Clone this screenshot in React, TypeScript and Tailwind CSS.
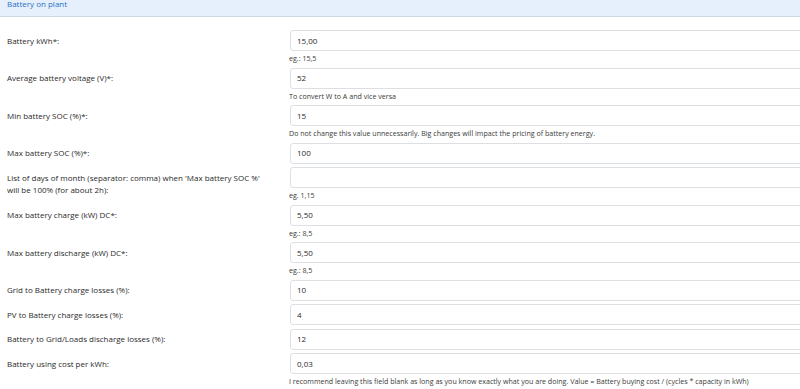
import React from "react";

type Row = { label: string[]; value: string; hint?: string };

const rows: Row[] = [
  { label: ["Battery kWh*:"], value: "15,00", hint: "eg.: 15,5" },
  { label: ["Average battery voltage (V)*:"], value: "52", hint: "To convert W to A and vice versa" },
  {
    label: ["Min battery SOC (%)*:"],
    value: "15",
    hint: "Do not change this value unnecessarily. Big changes will impact the pricing of battery energy.",
  },
  { label: ["Max battery SOC (%)*:"], value: "100" },
  {
    label: ["List of days of month (separator: comma) when 'Max battery SOC %'", "will be 100% (for about 2h):"],
    value: "",
    hint: "eg. 1,15",
  },
  { label: ["Max battery charge (kW) DC*:"], value: "5,50", hint: "eg.: 8,5" },
  { label: ["Max battery discharge (kW) DC*:"], value: "5,50", hint: "eg.: 8,5" },
  { label: ["Grid to Battery charge losses (%):"], value: "10" },
  { label: ["PV to Battery charge losses (%):"], value: "4" },
  { label: ["Battery to Grid/Loads discharge losses (%):"], value: "12" },
  {
    label: ["Battery using cost per kWh:"],
    value: "0,03",
    hint: "I recommend leaving this field blank as long as you know exactly what you are doing. Value = Battery buying cost / (cycles * capacity in kWh)",
  },
];

export default function App() {
  return (
    <div
      className="w-[800px] h-[389px] overflow-hidden bg-white text-[#2a2a2a]"
      style={{ fontFamily: '"Open Sans", "Noto Sans", sans-serif' }}
    >
      <div className="h-[17px] overflow-hidden bg-[#e6f0fd] border-b border-[#cdd8e6]">
        <div className="-mt-[2px] pl-[7px] text-[8px] leading-[12px] text-[#2b6fc2]">Battery on plant</div>
      </div>
      <div className="pt-[13px]">
        {rows.map((r, i) => (
          <div key={i} className="flex mb-[3.5px]">
            <div className="w-[290px] flex-none pl-[7px] pt-[4.5px] text-[8px] leading-[12px] text-[#2a2a2a]">
              {r.label.map((l, j) => (
                <div key={j}>{l}</div>
              ))}
            </div>
            <div className="w-[530px] flex-none">
              <div className="h-[21px] rounded-[3px] border border-[#dcdfe4] bg-white pl-[6px] flex items-center text-[8px] text-[#2a2a2a]">
                {r.value}
              </div>
              {r.hint && (
                <div className="h-[13px] -ml-[1px] pt-[1px] text-[7.1px] leading-[12px] text-[#3a3a3a]">{r.hint}</div>
              )}
            </div>
          </div>
        ))}
      </div>
    </div>
  );
}
